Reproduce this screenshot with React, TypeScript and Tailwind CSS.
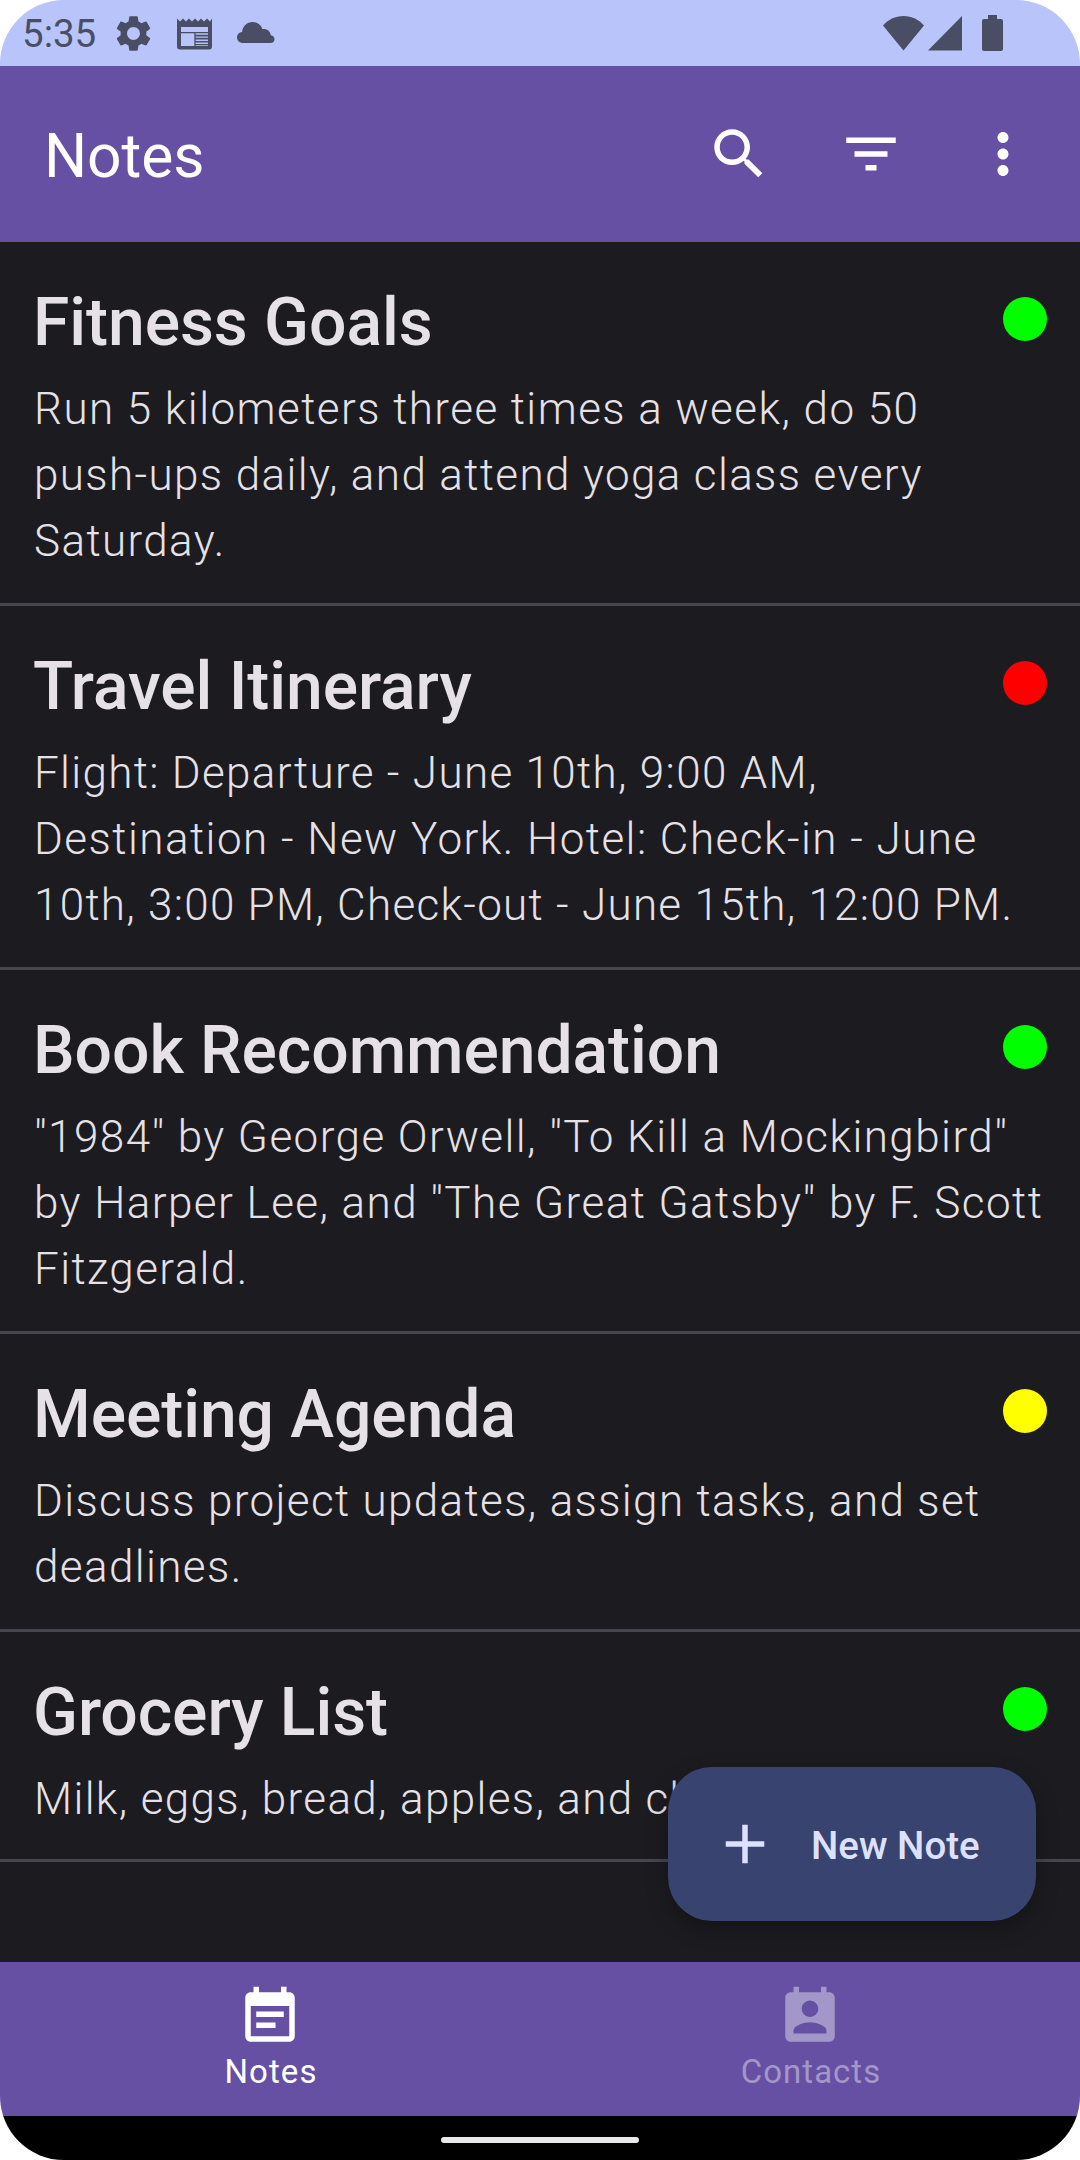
import React from "react";

const notes = [
  {
    title: "Fitness Goals",
    dot: "bg-[#00ff00]",
    pad: "pb-[29px]",
    lines: [
      ["Run 5 kilometers three times a week, do 50", "tracking-[1.44px]"],
      ["push-ups daily, and attend yoga class every", "tracking-[1.375px]"],
      ["Saturday.", "tracking-[1.375px]"],
    ],
  },
  {
    title: "Travel Itinerary",
    dot: "bg-[#ff0000]",
    pad: "pb-[29px]",
    lines: [
      ["Flight: Departure - June 10th, 9:00 AM,", "tracking-[1.33px]"],
      ["Destination - New York. Hotel: Check-in - June", "tracking-[1.465px]"],
      ["10th, 3:00 PM, Check-out - June 15th, 12:00 PM.", "tracking-[1.285px]"],
    ],
  },
  {
    title: "Book Recommendation",
    dot: "bg-[#00ff00]",
    pad: "pb-[29px]",
    lines: [
      ["\"1984\" by George Orwell, \"To Kill a Mockingbird\"", "tracking-[1.44px]"],
      ["by Harper Lee, and \"The Great Gatsby\" by F. Scott", "tracking-[1.44px]"],
      ["Fitzgerald.", "tracking-[1.375px]"],
    ],
  },
  {
    title: "Meeting Agenda",
    dot: "bg-[#ffff00]",
    pad: "pb-[29px]",
    lines: [
      ["Discuss project updates, assign tasks, and set", "tracking-[1.345px]"],
      ["deadlines.", "tracking-[1.375px]"],
    ],
  },
  {
    title: "Grocery List",
    dot: "bg-[#00ff00]",
    pad: "pb-[27px]",
    lines: [["Milk, eggs, bread, apples, and chicken.", "tracking-[1.345px]"]],
  },
];

function Icon({ d, className = "size-[66px]" }: { d: string; className?: string }) {
  return (
    <svg viewBox="0 0 24 24" fill="currentColor" className={className}>
      <path d={d} />
    </svg>
  );
}

const gear =
  "M19.14 12.94c.04-.3.06-.61.06-.94 0-.32-.02-.64-.07-.94l2.03-1.58c.18-.14.23-.41.12-.61l-1.92-3.32c-.12-.22-.37-.29-.59-.22l-2.39.96c-.5-.38-1.03-.7-1.62-.94L14.4 2.81c-.04-.24-.24-.41-.48-.41h-3.84c-.24 0-.43.17-.47.41l-.36 2.54c-.59.24-1.13.57-1.62.94l-2.39-.96c-.22-.08-.47 0-.59.22L2.74 8.87c-.12.21-.08.47.12.61l2.03 1.58c-.05.3-.09.63-.09.94s.02.64.07.94l-2.03 1.58c-.18.14-.23.41-.12.61l1.92 3.32c.12.22.37.29.59.22l2.39-.96c.5.38 1.03.7 1.62.94l.36 2.54c.05.24.24.41.48.41h3.84c.24 0 .44-.17.47-.41l.36-2.54c.59-.24 1.13-.56 1.62-.94l2.39.96c.22.08.47 0 .59-.22l1.92-3.32c.12-.22.07-.47-.12-.61l-2.01-1.58zM12 15.6c-1.98 0-3.6-1.62-3.6-3.6s1.62-3.6 3.6-3.6 3.6 1.62 3.6 3.6-1.62 3.6-3.6 3.6z";
const search =
  "M15.5 14h-.79l-.28-.27C15.41 12.59 16 11.11 16 9.5 16 5.91 13.09 3 9.5 3S3 5.91 3 9.5 5.91 16 9.5 16c1.61 0 3.09-.59 4.23-1.57l.27.28v.79l5 4.99L20.49 19l-4.99-5zm-6 0C7.01 14 5 11.99 5 9.5S7.01 5 9.5 5 14 7.01 14 9.5 11.99 14 9.5 14z";
const filter = "M10 18h4v-2h-4v2zM3 6v2h18V6H3zm3 7h12v-2H6v2z";
const more =
  "M12 8c1.1 0 2-.9 2-2s-.9-2-2-2-2 .9-2 2 .9 2 2 2zm0 2c-1.1 0-2 .9-2 2s.9 2 2 2 2-.9 2-2-.9-2-2-2zm0 6c-1.1 0-2 .9-2 2s.9 2 2 2 2-.9 2-2-.9-2-2-2z";
const eventNote =
  "M17 10H7v2h10v-2zm2-7h-1V1h-2v2H8V1H6v2H5c-1.11 0-1.99.9-1.99 2L3 19c0 1.1.89 2 2 2h14c1.1 0 2-.9 2-2V5c0-1.1-.9-2-2-2zm0 16H5V8h14v11zm-5-5H7v2h7v-2z";
const contact =
  "M19 3h-1V1h-2v2H8V1H6v2H5c-1.11 0-2 .9-2 2v14c0 1.1.89 2 2 2h14c1.1 0 2-.9 2-2V5c0-1.1-.9-2-2-2zm-7 3c1.66 0 3 1.34 3 3s-1.34 3-3 3-3-1.34-3-3 1.34-3 3-3zm6 12H6v-1c0-2 4-3.1 6-3.1s6 1.1 6 3.1v1z";

function StatusBar() {
  return (
    <div className="flex h-[66px] shrink-0 items-center bg-[#b8c4fa] pl-[22px] pr-[77px] text-[#4a4e64]">
      <span className="w-[90px] pt-[2px] text-[38.5px] leading-[66px]">5:35</span>
      <Icon d={gear} className="size-[43px]" />
      <svg viewBox="0 0 35 32" fill="currentColor" className="ml-[22px] mt-[1px] h-[32px] w-[35px]">
        <path
          fillRule="evenodd"
          d="M0 0.5 L3 3.5 L6 0.5 L9 3.5 L12 0.5 L15 3.5 L18 0.5 L21 3.5 L24 0.5 L27 3.5 L30 0.5 L33 3.5 L35 0.5 V28.5 Q35 31.5 32 31.5 H3 Q0 31.5 0 28.5 Z M4 9 V14 H31 V9 Z M4 15.2 V28 H17.3 V15.2 Z M18.6 15.2 V16.7 H31 V15.2 Z M18.6 18.4 V19.8 H31 V18.4 Z M18.6 21.5 V22.9 H31 V21.5 Z M18.6 24.5 V25.9 H31 V24.5 Z M18.6 27.2 V28 H31 V27.2 Z"
        />
      </svg>
      <svg viewBox="0 0 38 21" fill="currentColor" className="ml-[25px] mb-[1px] h-[21px] w-[38px]">
        <path d="M6 21 C2.6 21 0 18.6 0 15.5 C0 12.6 2.2 10.3 5 10 C5.8 4 10 0 15.5 0 C20 0 23.8 2.8 25.4 7 C30 6.4 33.4 9.3 33.8 13.3 C36 13.6 37.5 15.2 37.5 17.2 C37.5 19.4 35.8 21 33.6 21 Z" />
      </svg>
      <div className="flex-1" />
      <svg viewBox="0 0 41 35" fill="currentColor" className="h-[35px] w-[41px]">
        <path d="M0 9.5 C5 3.6 12.4 0 20.5 0 C28.6 0 36 3.6 41 9.5 L20.5 34.5 Z" />
      </svg>
      <svg viewBox="0 0 34 35" fill="currentColor" className="ml-[4px] h-[35px] w-[34px]">
        <path d="M34 0 V34.5 H0 Z" />
      </svg>
      <svg viewBox="0 0 21 36" fill="currentColor" className="ml-[20px] h-[36px] w-[21px]">
        <path d="M6 0 H15 V4 H19 Q21 4 21 6 V34 Q21 36 19 36 H2 Q0 36 0 34 V6 Q0 4 2 4 H6 Z" />
      </svg>
    </div>
  );
}

export default function App() {
  return (
    <div className="h-[2160px] w-[1080px] bg-white font-[Roboto,sans-serif]">
      <div className="relative flex h-full flex-col overflow-hidden rounded-[64px]">
        <StatusBar />
        <header className="flex h-[176px] shrink-0 items-center bg-[#6650a3] pl-[44px] pr-[11px] text-white">
          <h1 className="flex-1 pt-[4px] text-[60.5px] leading-[77px] tracking-[-0.1px]">Notes</h1>
          {[search, filter, more].map((d) => (
            <button key={d} className="flex w-[132px] justify-center">
              <Icon d={d} />
            </button>
          ))}
        </header>
        <main className="min-h-0 flex-1 overflow-hidden bg-[#1c1b1f] text-[#e5e1e6]">
          {notes.map((n) => (
            <article key={n.title} className={`border-b-[3px] border-[#47464f] px-[33px] pt-[37px] ${n.pad}`}>
              <div className="flex justify-between">
                <h2 className="text-[66px] font-medium leading-[88px] tracking-[-0.06px]">{n.title}</h2>
                <span className={`mt-[18px] size-[44px] rounded-full ${n.dot}`} />
              </div>
              <div className="mt-[9px] whitespace-nowrap pl-px text-[44px] font-light leading-[66px]">
                {n.lines.map(([text, tracking]) => (
                  <p key={text} className={tracking}>
                    {text}
                  </p>
                ))}
              </div>
            </article>
          ))}
        </main>
        <nav className="flex h-[154px] shrink-0 bg-[#6650a3] text-white">
          <button className="flex flex-1 flex-col items-center pt-[22px]">
            <Icon d={eventNote} />
            <span className="pl-[2px] text-[33px] leading-[44px] tracking-[1.1px]">Notes</span>
          </button>
          <button className="flex flex-1 flex-col items-center pt-[22px] text-[#a396c8]">
            <Icon d={contact} />
            <span className="pl-[2px] text-[33px] leading-[44px] tracking-[1px]">Contacts</span>
          </button>
        </nav>
        <div className="flex h-[44px] shrink-0 justify-center bg-black pt-[21px]">
          <div className="h-[6px] w-[198px] rounded-full bg-[#e9e7ea]" />
        </div>
        <button className="absolute right-[44px] bottom-[239px] flex h-[154px] w-[368px] items-center rounded-[44px] bg-[#394370] pl-[44px] text-[#dde1ff] shadow-[0_8px_22px_rgba(0,0,0,0.3)]">
          <Icon d="M19 13h-6v6h-2v-6H5v-2h6V5h2v6h6v2z" />
          <span className="ml-[33px] pt-[2px] text-[38.5px] font-medium leading-[55px]">New Note</span>
        </button>
      </div>
    </div>
  );
}
